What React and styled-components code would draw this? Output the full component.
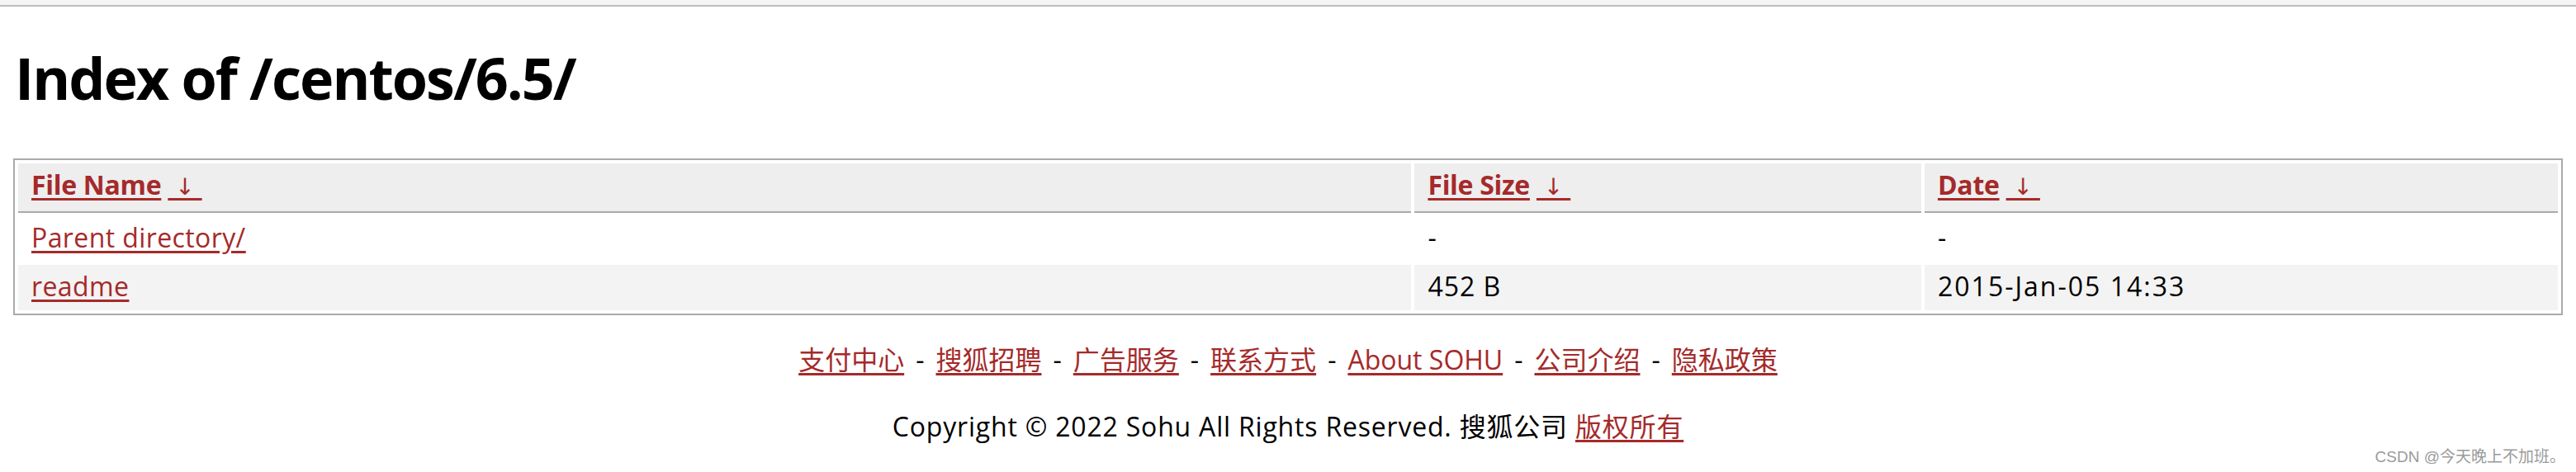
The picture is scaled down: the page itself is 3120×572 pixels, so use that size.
import React from "react";
import styled, { createGlobalStyle } from "styled-components";

const GlobalStyle = createGlobalStyle`
  html, body {
    margin: 0;
    padding: 0;
    background: #fff;
  }
  body {
    font-family: "Open Sans", "Noto Sans CJK SC", sans-serif;
    color: #000;
  }
`;

const Shell = styled.div`
  position: relative;
  min-height: 572px;
`;

const TopBar = styled.div`
  height: 6px;
  background: #f5f5f5;
  border-bottom: 2px solid #bdbdbd;
`;

const Page = styled.div`
  padding: 0 16px;
`;

const Title = styled.h1`
  margin: 39px 0 50px;
  font-size: 70px;
  line-height: 95px;
  font-weight: 700;
  letter-spacing: -2px;
  padding-left: 2px;
`;

const Table = styled.table`
  width: 100%;
  table-layout: fixed;
  border: 2px solid #aaa;
  border-spacing: 4px;
  font-size: 32px;
`;

const Th = styled.th`
  box-sizing: border-box;
  width: ${props => props.w};
  padding: 4px 16px 7px;
  line-height: 44px;
  text-align: left;
  font-weight: 700;
  letter-spacing: -0.3px;
  background: #eee;
  border-bottom: 2px solid #aaa;
`;

const Tr = styled.tr`
  background: ${props => props.striped ? '#f3f3f3' : '#fff'};
`;

const Td = styled.td`
  padding: 4px 16px 7px;
  line-height: 44px;
  color: #000;
  white-space: nowrap;
  letter-spacing: ${props => props.spacing || '0.4px'};
`;

const Link = styled.a`
  color: #a52a2a;
  text-decoration: underline;
  text-decoration-thickness: 3px;
  text-underline-offset: 4px;
  cursor: pointer;
`;

const Arrow = styled(Link)`
  font-family: "DejaVu Sans", sans-serif;
  font-weight: 400;
  font-size: 28px;
  letter-spacing: 0;
`;

const Footer = styled.div`
  margin-top: 32px;
  font-size: 32px;
  line-height: 44px;
  text-align: center;
`;

const LinkRow = styled.div`
  display: flex;
  justify-content: center;
  gap: 14px;
`;

const Sep = styled.span`
  color: #000;
`;

const Copyright = styled.div`
  margin-top: 37px;
  color: #000;
  letter-spacing: 0.8px;
`;

const Watermark = styled.div`
  position: absolute;
  right: 13px;
  bottom: 6px;
  font-family: "Liberation Sans", "Noto Sans CJK SC", sans-serif;
  font-size: 19px;
  line-height: 24px;
  color: #9a9a9a;
  text-shadow: 0 0 1px #fff;
`;

const columns = [
  { label: 'File Name', w: '55%' },
  { label: 'File Size', w: '20%' },
  { label: 'Date', w: '25%' },
];

const rows = [
  { name: 'Parent directory/', size: '-', date: '-' },
  { name: 'readme', size: '452 B', date: '2015-Jan-05 14:33' },
];

const footerLinks = ['支付中心', '搜狐招聘', '广告服务', '联系方式', 'About SOHU', '公司介绍', '隐私政策'];

export default function App() {
  return (
    <Shell>
      <GlobalStyle />
      <TopBar />
      <Page>
        <Title>Index of /centos/6.5/</Title>
        <Table>
          <thead>
            <tr>
              {columns.map(c => (
                <Th key={c.label} w={c.w}>
                  <Link>{c.label}</Link> <Arrow>{'\u00a0↓\u00a0'}</Arrow>
                </Th>
              ))}
            </tr>
          </thead>
          <tbody>
            {rows.map((r, i) => (
              <Tr key={r.name} striped={i % 2 === 1}>
                <Td><Link>{r.name}</Link></Td>
                <Td spacing="1px">{r.size}</Td>
                <Td spacing="2px">{r.date}</Td>
              </Tr>
            ))}
          </tbody>
        </Table>
        <Footer>
          <LinkRow>
            {footerLinks.map((l, i) => (
              <React.Fragment key={l}>
                {i > 0 && <Sep>-</Sep>}
                <Link>{l}</Link>
              </React.Fragment>
            ))}
          </LinkRow>
          <Copyright>
            Copyright © 2022 Sohu All Rights Reserved. 搜狐公司 <Link>版权所有</Link>
          </Copyright>
        </Footer>
      </Page>
      <Watermark>CSDN @今天晚上不加班。</Watermark>
    </Shell>
  );
}
